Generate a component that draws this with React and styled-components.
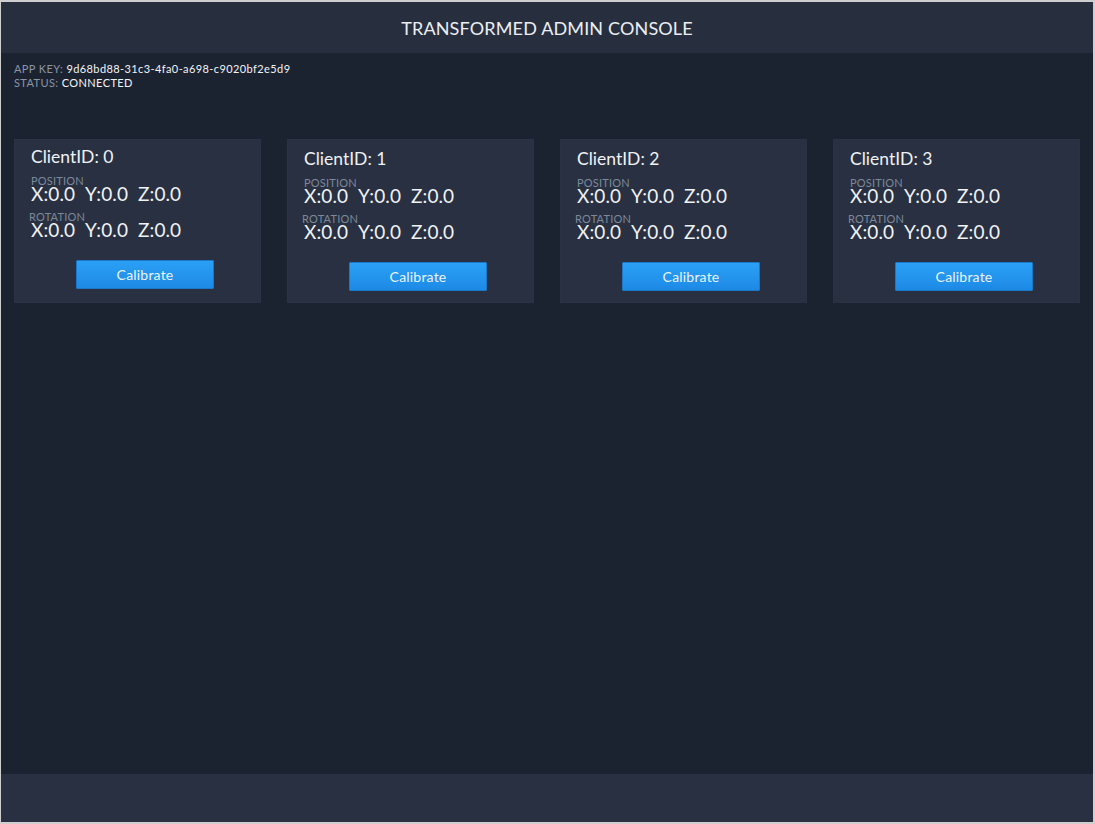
import React from "react";
import styled, { createGlobalStyle } from "styled-components";

const Global = createGlobalStyle`
  html, body { margin: 0; padding: 0; background: #d4d4d4; }
  body { font-family: "Lato", "Open Sans", sans-serif; }
  * { box-sizing: border-box; }
`;

const Frame = styled.div`
  width: 1095px;
  height: 824px;
  border-style: solid;
  border-color: #cfcfcf;
  border-width: 2px 2px 2px 1px;
  background: #1c2330;
  display: flex;
  flex-direction: column;
  color: #eef0f3;
`;

const Header = styled.header`
  height: 51px;
  background: #272f3f;
  display: flex;
  align-items: center;
  justify-content: center;
  font-size: 18px;
  letter-spacing: 0.15px;
  color: #eceef2;
`;

const Main = styled.main`
  flex: 1;
  padding: 9px 13px 0 13px;
`;

const Info = styled.div`
  font-size: 11px;
  line-height: 14px;
  letter-spacing: 0.4px;
  color: #f2f4f7;
`;

const InfoLabel = styled.span`
  color: #8b94a5;
`;

const Cards = styled.div`
  margin-top: 49px;
  display: grid;
  grid-template-columns: repeat(4, 1fr);
  gap: 26px;
`;

const Card = styled.div`
  height: 164px;
  background: #283041;
  border: 1px solid #2a3244;
  padding: ${(p) => (p.$lift ? 7 : 9)}px 0 0 16px;
  display: flex;
  flex-direction: column;
`;

const ClientTitle = styled.div`
  font-size: 17.5px;
  line-height: 20px;
  margin: 0 0 9px 0;
  color: #f0f2f5;
`;

const Label = styled.div`
  font-size: 11px;
  line-height: 10px;
  color: #7e8899;
  letter-spacing: 0.2px;
  margin-left: ${(p) => p.$shift || 0}px;
`;

const Values = styled.div`
  display: flex;
  gap: 10px;
  font-size: 19px;
  line-height: 16px;
  letter-spacing: 0.1px;
  margin-bottom: ${(p) => p.$after}px;
  color: #f0f2f5;
`;

const ButtonRow = styled.div`
  display: flex;
  padding-left: 45px;
`;

const Button = styled.button`
  width: 138px;
  height: 29px;
  border: 1px solid #1a78c8;
  border-radius: 1px;
  background: linear-gradient(#2ba0f5, #1d8ae6);
  color: #eaf4fd;
  font-family: "Lato", "Open Sans", sans-serif;
  font-size: 14px;
  letter-spacing: 0.2px;
  padding: 0;
  cursor: pointer;
`;

const Footer = styled.footer`
  height: 48px;
  background: #283041;
`;

const clients = [0, 1, 2, 3];

function Triple({ after }) {
  return (
    <Values $after={after}>
      <span>X:0.0</span>
      <span>Y:0.0</span>
      <span>Z:0.0</span>
    </Values>
  );
}

export default function App() {
  return (
    <>
      <Global />
      <Frame>
        <Header>TRANSFORMED ADMIN CONSOLE</Header>
        <Main>
          <Info>
            <div>
              <InfoLabel>APP KEY: </InfoLabel>9d68bd88-31c3-4fa0-a698-c9020bf2e5d9
            </div>
            <div>
              <InfoLabel>STATUS: </InfoLabel>CONNECTED
            </div>
          </Info>
          <Cards>
            {clients.map((id) => (
              <Card key={id} $lift={id === 0}>
                <ClientTitle>ClientID: {id}</ClientTitle>
                <Label>POSITION</Label>
                <Triple after={10} />
                <Label $shift={-2}>ROTATION</Label>
                <Triple after={22} />
                <ButtonRow>
                  <Button>Calibrate</Button>
                </ButtonRow>
              </Card>
            ))}
          </Cards>
        </Main>
        <Footer />
      </Frame>
    </>
  );
}
